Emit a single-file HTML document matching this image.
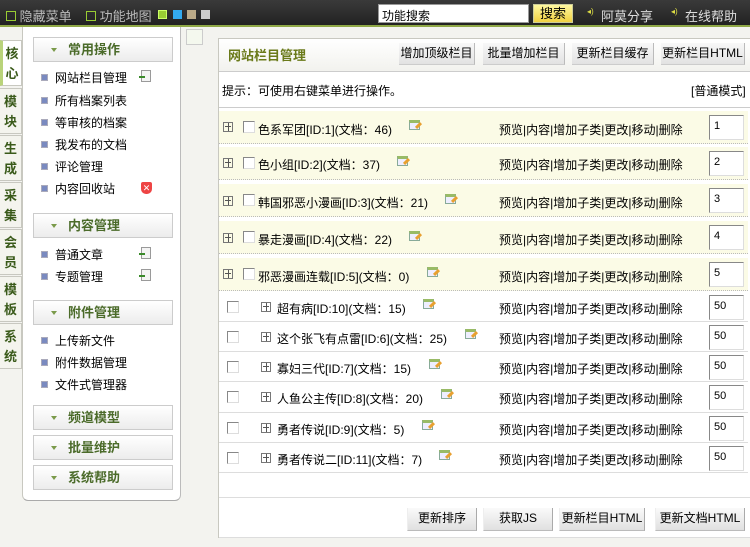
<!DOCTYPE html>
<html><head><meta charset="utf-8">
<style>
*{margin:0;padding:0;box-sizing:border-box}
body{width:750px;height:547px;overflow:hidden;background:#f3f3ef;font-family:"Liberation Sans","Noto Sans CJK SC","WenQuanYi Zen Hei",sans-serif;font-size:12px;color:#000;position:relative}
.a{position:absolute}
#top{left:0;top:0;width:750px;height:27px;background:linear-gradient(#3a3a3a,#222);border-bottom:2px solid #8fa846}
#top span{color:#bbb;font-size:13px}
.ico{display:inline-block;border:1px solid #9c3;width:10px;height:10px}
.tab{left:0;width:22px;height:46px;border:1px solid #c8c8c0;border-left:none;background:#f4f4ee;color:#3a5a1a;font-weight:bold;font-size:13px;line-height:20px;text-align:center;padding-top:3px}
.tab.on{border-left:3px solid #b9d37a;background:#fff}
#nav{left:22px;top:27px;width:159px;height:474px;background:#fff;border-left:1px solid #c8c8c0;border-right:1px solid #bbb;border-bottom:1px solid #aaa;border-radius:0 0 6px 6px}
.hd{left:33px;width:140px;height:25px;border:1px solid #ccc;background:linear-gradient(#fff,#ececec);color:#4b6b2a;font-weight:bold;font-size:13px;line-height:23px;padding-left:34px}
.hd:before{content:"";position:absolute;left:17px;top:10px;border-left:3px solid transparent;border-right:3px solid transparent;border-top:4px solid #7a9a4a}
.it{left:41px;font-size:12px;line-height:14px}
.it:before{content:"";display:inline-block;width:5px;height:5px;background:#7a8ac0;border:1px solid #aab;margin-right:7px;vertical-align:1px}
.add{width:10px;height:12px;border:1px solid #9a9a9a;background:#f4f4f4}
.add:after{content:"";position:absolute;left:-3px;top:5px;width:6px;height:2px;background:#3a8a2a}
#panel{left:218px;top:38px;width:540px;height:500px;background:#fff;border:1px solid #c8c8c0}
.btn{top:43px;height:22px;line-height:20px;background:linear-gradient(#f8f8f8,#e2e2e2);border-right:1px solid #bbb;border-bottom:1px solid #ccc;font-size:12px;text-align:center}
.row{left:219px;width:529px}
.y{background:#fbfbe6;border-bottom:1px dotted #bbb}
.w{border-bottom:1px solid #ddd}
.pl{display:inline-block;width:10px;height:10px;border:1px solid #777;position:absolute}
.pl:before{content:"";position:absolute;left:1px;top:3px;width:6px;height:1px;background:#555}
.pl:after{content:"";position:absolute;left:4px;top:0;width:1px;height:8px;background:#555}
.cb{position:absolute;width:12px;height:12px;border:1px solid #888;border-right-color:#ddd;border-bottom-color:#ddd;background:#fff}
.t{position:absolute;font-size:12px;white-space:nowrap}
.ed{position:absolute;width:11px;height:10px;border:1px solid #8a9;background:#eef;border-top:3px solid #9b6}
.ed:after{content:"";position:absolute;left:5px;top:1px;width:7px;height:3px;background:#e8a030;transform:rotate(-45deg)}
.op{position:absolute;left:280px;font-size:12px;white-space:nowrap}
.in{position:absolute;left:490px;width:35px;height:25px;border:1px solid #888;border-right-color:#ddd;border-bottom-color:#ddd;background:#fff;font-size:11px;padding:4px 0 0 4px}
.bb{top:508px;height:23px;line-height:21px;background:linear-gradient(#fafafa,#e0e0e0);border-right:1px solid #aaa;border-bottom:1px solid #bbb;border-left:1px solid #eee;text-align:center}
</style></head><body>
<div id="top" class="a">
 <span class="a" style="left:6px;top:6px"><i class="ico" style="border-color:#9c3"></i> 隐藏菜单</span>
 <span class="a" style="left:86px;top:6px"><i class="ico"></i> 功能地图</span>
 <i class="a" style="left:158px;top:10px;width:9px;height:9px;background:#9c3;border:1px solid #cf6"></i>
 <i class="a" style="left:173px;top:10px;width:9px;height:9px;background:#3ae"></i>
 <i class="a" style="left:187px;top:10px;width:9px;height:9px;background:#ba8"></i>
 <i class="a" style="left:201px;top:10px;width:9px;height:9px;background:#ccc"></i>
 <div class="a" style="left:378px;top:4px;width:151px;height:19px;background:#fff;border:1px solid #999;font-size:12px;padding:2px 3px">功能搜索</div>
 <div class="a" style="left:533px;top:4px;width:40px;height:19px;background:linear-gradient(#fff8a0,#f0d040);border:1px solid #cc9;font-size:13px;text-align:center;line-height:17px">搜索</div>
 <span class="a" style="left:587px;top:7px;color:#dd4;font-size:8px">◂)</span><span class="a" style="left:601px;top:6px;color:#ddd">阿莫分享</span>
 <span class="a" style="left:671px;top:7px;color:#dd4;font-size:8px">◂)</span><span class="a" style="left:685px;top:6px;color:#ddd">在线帮助</span>
</div>
<div class="a" style="left:186px;top:29px;width:17px;height:16px;border:1px solid #ccc;background:#f4f8ee"></div>
<div class="a tab on" style="top:40px">核<br>心</div>
<div class="a tab" style="top:88px">模<br>块</div>
<div class="a tab" style="top:135px">生<br>成</div>
<div class="a tab" style="top:182px">采<br>集</div>
<div class="a tab" style="top:229px">会<br>员</div>
<div class="a tab" style="top:276px">模<br>板</div>
<div class="a tab" style="top:323px">系<br>统</div>
<div id="nav" class="a"></div>
<div class="a hd" style="top:37px">常用操作</div>
<div class="a it" style="top:71px">网站栏目管理</div><div class="a add" style="left:141px;top:70px"></div>
<div class="a it" style="top:94px">所有档案列表</div>
<div class="a it" style="top:116px">等审核的档案</div>
<div class="a it" style="top:138px">我发布的文档</div>
<div class="a it" style="top:160px">评论管理</div>
<div class="a it" style="top:182px">内容回收站</div><div class="a" style="left:141px;top:182px;width:11px;height:12px;background:#e44;border-radius:2px 2px 5px 5px;color:#fff;font-size:9px;line-height:12px;text-align:center">✕</div>
<div class="a hd" style="top:213px">内容管理</div>
<div class="a it" style="top:248px">普通文章</div><div class="a add" style="left:141px;top:247px"></div>
<div class="a it" style="top:270px">专题管理</div><div class="a add" style="left:141px;top:269px"></div>
<div class="a hd" style="top:300px">附件管理</div>
<div class="a it" style="top:334px">上传新文件</div>
<div class="a it" style="top:356px">附件数据管理</div>
<div class="a it" style="top:378px">文件式管理器</div>
<div class="a hd" style="top:405px">频道模型</div>
<div class="a hd" style="top:435px">批量维护</div>
<div class="a hd" style="top:465px">系统帮助</div>

<div id="panel" class="a"></div>
<div class="a" style="left:219px;top:39px;width:531px;height:33px;background:linear-gradient(#fff,#f2f2ee);border-bottom:1px solid #ccc"></div>
<div class="a" style="left:228px;top:45px;color:#6a7a1a;font-weight:bold;font-size:13px">网站栏目管理</div>
<div class="a btn" style="left:399px;width:76px">增加顶级栏目</div>
<div class="a btn" style="left:483px;width:82px">批量增加栏目</div>
<div class="a btn" style="left:572px;width:82px">更新栏目缓存</div>
<div class="a btn" style="left:661px;width:84px">更新栏目HTML</div>
<div class="a" style="left:222px;top:82px">提示：可使用右键菜单进行操作。</div>
<div class="a" style="left:691px;top:82px">[普通模式]</div>
<div class="a" style="left:219px;top:107px;width:531px;border-top:1px solid #ccc"></div>

<div class="a row y" style="top:111px;height:33px"><i class="pl" style="left:4px;top:11px"></i><i class="cb" style="left:24px;top:10px"></i><span class="t" style="left:39px;top:10px">色系军团[ID:1](文档：46)</span><i class="ed" style="left:190px;top:9px"></i><span class="op" style="top:10px">预览|内容|增加子类|更改|移动|删除</span><div class="in" style="top:4px">1</div></div>
<div class="a row y" style="top:147px;height:33px"><i class="pl" style="left:4px;top:11px"></i><i class="cb" style="left:24px;top:10px"></i><span class="t" style="left:39px;top:9px">色小组[ID:2](文档：37)</span><i class="ed" style="left:178px;top:9px"></i><span class="op" style="top:9px">预览|内容|增加子类|更改|移动|删除</span><div class="in" style="top:4px">2</div></div>
<div class="a row y" style="top:184px;height:33px"><i class="pl" style="left:4px;top:12px"></i><i class="cb" style="left:24px;top:10px"></i><span class="t" style="left:39px;top:10px">韩国邪恶小漫画[ID:3](文档：21)</span><i class="ed" style="left:226px;top:10px"></i><span class="op" style="top:10px">预览|内容|增加子类|更改|移动|删除</span><div class="in" style="top:4px">3</div></div>
<div class="a row y" style="top:221px;height:33px"><i class="pl" style="left:4px;top:12px"></i><i class="cb" style="left:24px;top:10px"></i><span class="t" style="left:39px;top:10px">暴走漫画[ID:4](文档：22)</span><i class="ed" style="left:190px;top:10px"></i><span class="op" style="top:10px">预览|内容|增加子类|更改|移动|删除</span><div class="in" style="top:4px">4</div></div>
<div class="a row y" style="top:258px;height:33px"><i class="pl" style="left:4px;top:11px"></i><i class="cb" style="left:24px;top:10px"></i><span class="t" style="left:39px;top:10px">邪恶漫画连载[ID:5](文档：0)</span><i class="ed" style="left:208px;top:9px"></i><span class="op" style="top:10px">预览|内容|增加子类|更改|移动|删除</span><div class="in" style="top:4px">5</div></div>

<div class="a row w" style="top:292px;height:30px"><i class="cb" style="left:8px;top:9px"></i><i class="pl" style="left:42px;top:10px"></i><span class="t" style="left:58px;top:8px">超有病[ID:10](文档：15)</span><i class="ed" style="left:204px;top:7px"></i><span class="op" style="top:8px">预览|内容|增加子类|更改|移动|删除</span><div class="in" style="top:3px">50</div></div>
<div class="a row w" style="top:322px;height:30px"><i class="cb" style="left:8px;top:9px"></i><i class="pl" style="left:42px;top:10px"></i><span class="t" style="left:58px;top:8px">这个张飞有点雷[ID:6](文档：25)</span><i class="ed" style="left:246px;top:7px"></i><span class="op" style="top:8px">预览|内容|增加子类|更改|移动|删除</span><div class="in" style="top:3px">50</div></div>
<div class="a row w" style="top:352px;height:30px"><i class="cb" style="left:8px;top:9px"></i><i class="pl" style="left:42px;top:10px"></i><span class="t" style="left:58px;top:8px">寡妇三代[ID:7](文档：15)</span><i class="ed" style="left:210px;top:7px"></i><span class="op" style="top:8px">预览|内容|增加子类|更改|移动|删除</span><div class="in" style="top:3px">50</div></div>
<div class="a row w" style="top:382px;height:31px"><i class="cb" style="left:8px;top:9px"></i><i class="pl" style="left:42px;top:10px"></i><span class="t" style="left:58px;top:8px">人鱼公主传[ID:8](文档：20)</span><i class="ed" style="left:222px;top:7px"></i><span class="op" style="top:8px">预览|内容|增加子类|更改|移动|删除</span><div class="in" style="top:3px">50</div></div>
<div class="a row w" style="top:413px;height:30px"><i class="cb" style="left:8px;top:9px"></i><i class="pl" style="left:42px;top:10px"></i><span class="t" style="left:58px;top:8px">勇者传说[ID:9](文档：5)</span><i class="ed" style="left:203px;top:7px"></i><span class="op" style="top:8px">预览|内容|增加子类|更改|移动|删除</span><div class="in" style="top:3px">50</div></div>
<div class="a row w" style="top:443px;height:30px"><i class="cb" style="left:8px;top:9px"></i><i class="pl" style="left:42px;top:10px"></i><span class="t" style="left:58px;top:8px">勇者传说二[ID:11](文档：7)</span><i class="ed" style="left:220px;top:7px"></i><span class="op" style="top:8px">预览|内容|增加子类|更改|移动|删除</span><div class="in" style="top:3px">50</div></div>

<div class="a" style="left:219px;top:497px;width:531px;border-top:1px solid #ddd"></div>
<div class="a bb" style="left:407px;width:70px">更新排序</div>
<div class="a bb" style="left:483px;width:70px">获取JS</div>
<div class="a bb" style="left:559px;width:86px">更新栏目HTML</div>
<div class="a bb" style="left:655px;width:90px">更新文档HTML</div>
<div class="a" style="left:219px;top:537px;width:531px;border-top:1px solid #ddd"></div>
</body></html>
